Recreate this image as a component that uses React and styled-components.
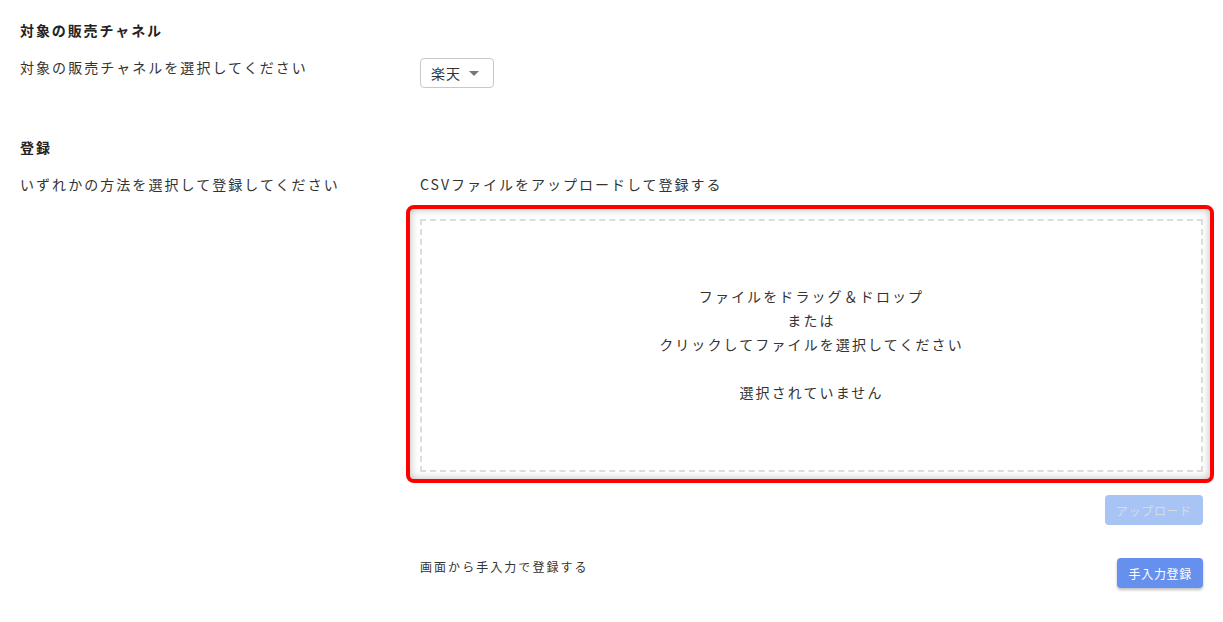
import React from "react";
import styled, { createGlobalStyle } from "styled-components";

const Global = createGlobalStyle`
  html, body { margin: 0; padding: 0; background: #fff; }
  body {
    font-family: "Noto Sans CJK JP", "Noto Sans", sans-serif;
    color: #333;
    -webkit-font-smoothing: antialiased;
  }
`;

const Page = styled.div`
  padding: 20px 20px 30px 20px;
  display: flex;
  flex-direction: column;
`;

const Section = styled.section`
  display: flex;
  flex-direction: column;
  margin-top: ${(p) => p.$top || 0}px;
`;

const Heading = styled.h2`
  margin: 0;
  font-size: 14px;
  line-height: 20px;
  font-weight: 700;
  letter-spacing: 1.9px;
  color: #222;
`;

const Row = styled.div`
  display: flex;
  align-items: flex-start;
  margin-top: 17px;
`;

const Label = styled.div`
  width: 400px;
  flex: none;
  font-size: 14px;
  line-height: 20px;
  letter-spacing: 2.05px;
  color: #333;
`;

const Body = styled.div`
  flex: 1;
  min-width: 0;
  display: flex;
  flex-direction: column;
`;

const Select = styled.button`
  align-self: flex-start;
  margin-top: 1px;
  height: 30px;
  width: 74px;
  box-sizing: border-box;
  border: 1px solid #c8c8c8;
  border-radius: 4px;
  background: #fff;
  padding: 0 0 0 10px;
  display: flex;
  align-items: center;
  gap: 8px;
  font-family: inherit;
  font-size: 14px;
  letter-spacing: 1px;
  color: #333;
`;

const Caret = styled.span`
  width: 0;
  height: 0;
  border-left: 5px solid transparent;
  border-right: 5px solid transparent;
  border-top: 5px solid #777;
`;

const SubTitle = styled.div`
  font-size: 14px;
  line-height: 20px;
  letter-spacing: 2px;
  color: #333;
`;

const DropFrame = styled.div`
  margin: 11px -11px 0 -14px;
  border: 4px solid #ff0000;
  border-radius: 8px;
  padding: 10px 7px 7px 10px;
  box-shadow: inset 0 0 8px rgba(0, 0, 0, 0.28);
`;

const DropZone = styled.div`
  height: 245px;
  padding-bottom: 4px;
  border: 2px dashed #dcdcdc;
  display: flex;
  flex-direction: column;
  align-items: center;
  justify-content: center;
  text-align: center;
  font-size: 14px;
  line-height: 24px;
  letter-spacing: 2.1px;
  color: #333;
  cursor: pointer;
`;

const Line = styled.div`
  min-height: 24px;
`;

const Actions = styled.div`
  display: flex;
  justify-content: flex-end;
  margin-top: 12px;
`;

const Button = styled.button`
  height: 30px;
  box-sizing: border-box;
  border: none;
  border-radius: 4px;
  padding: 0 ${(p) => p.$px || 10}px;
  font-family: inherit;
  font-size: 12px;
  font-weight: 400;
  letter-spacing: 0.7px;
  background: ${(p) => (p.disabled ? "#a8c4f4" : "#6690ee")};
  color: ${(p) => (p.disabled ? "#d4dbe8" : "#fff")};
  box-shadow: ${(p) => (p.disabled ? "none" : "0 2px 3px rgba(0,0,0,0.25)")};
`;

const ManualRow = styled.div`
  display: flex;
  justify-content: space-between;
  align-items: flex-start;
  margin-top: 33px;
`;

const SmallText = styled.div`
  font-size: 12px;
  line-height: 18px;
  letter-spacing: 2.05px;
  color: #333;
`;

export default function App() {
  return (
    <>
      <Global />
      <Page>
        <Section>
          <Heading>対象の販売チャネル</Heading>
          <Row>
            <Label>対象の販売チャネルを選択してください</Label>
            <Body>
              <Select>
                楽天 <Caret />
              </Select>
            </Body>
          </Row>
        </Section>
        <Section $top={49}>
          <Heading>登録</Heading>
          <Row>
            <Label>いずれかの方法を選択して登録してください</Label>
            <Body>
              <SubTitle>CSVファイルをアップロードして登録する</SubTitle>
              <DropFrame>
                <DropZone>
                  <Line>ファイルをドラッグ＆ドロップ</Line>
                  <Line>または</Line>
                  <Line>クリックしてファイルを選択してください</Line>
                  <Line />
                  <Line>選択されていません</Line>
                </DropZone>
              </DropFrame>
              <Actions>
                <Button disabled $px={11}>アップロード</Button>
              </Actions>
              <ManualRow>
                <SmallText>画面から手入力で登録する</SmallText>
                <Button $px={11}>手入力登録</Button>
              </ManualRow>
            </Body>
          </Row>
        </Section>
      </Page>
    </>
  );
}
